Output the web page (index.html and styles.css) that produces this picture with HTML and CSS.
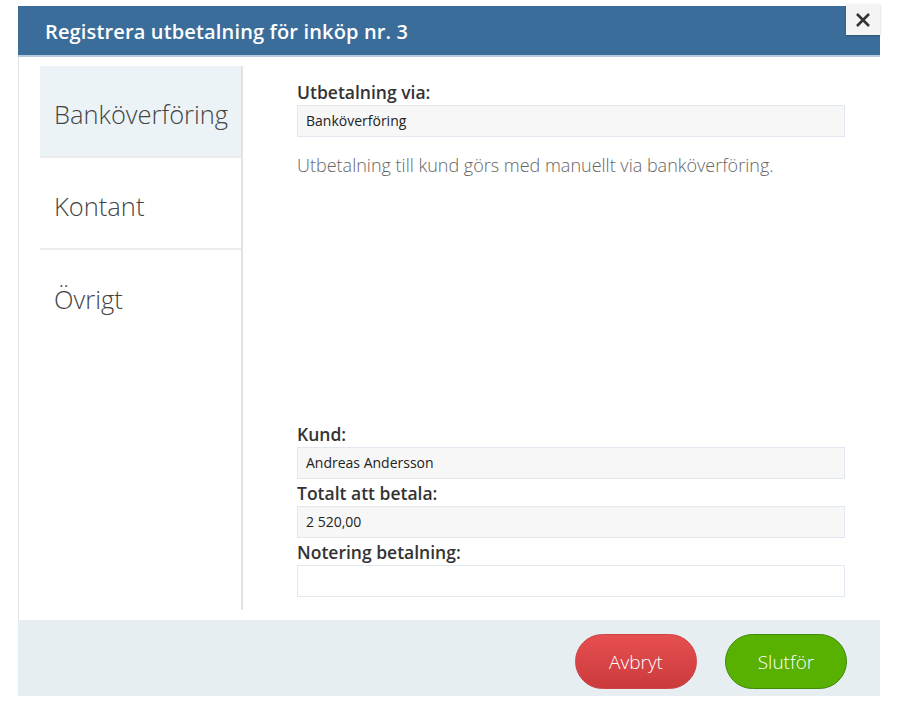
FILE: index.html
```html
<!DOCTYPE html>
<html lang="sv">

<head>
  <meta charset="UTF-8">
  <title>Registrera utbetalning</title>
  <link rel="stylesheet" href="styles.css">
</head>

<body>
  <div class="dialog">
    <div class="header">
      <h1>Registrera utbetalning för inköp nr. 3</h1>
      <button class="close">
        <svg width="16" height="16" viewBox="0 0 16 16"><path d="M2 2 L14 14 M14 2 L2 14" stroke="#333" stroke-width="2.6" fill="none"/></svg>
      </button>
    </div>
    <div class="main">
      <ul class="methods">
        <li class="active">Banköverföring</li>
        <li>Kontant</li>
        <li>Övrigt</li>
      </ul>
      <div class="content">
        <div class="field">
          <label>Utbetalning via:</label>
          <div class="input">Banköverföring</div>
        </div>
        <p class="desc">Utbetalning till kund görs med manuellt via banköverföring.</p>
        <div class="bottom">
          <div class="field">
            <label>Kund:</label>
            <div class="input">Andreas Andersson</div>
          </div>
          <div class="field">
            <label>Totalt att betala:</label>
            <div class="input">2 520,00</div>
          </div>
          <div class="field">
            <label>Notering betalning:</label>
            <div class="input empty"></div>
          </div>
        </div>
      </div>
    </div>
    <div class="footer">
      <button class="btn cancel">Avbryt</button>
      <button class="btn done">Slutför</button>
    </div>
  </div>
</body>

</html>
```

FILE: styles.css
```css
* {
  margin: 0;
  padding: 0;
  box-sizing: border-box;
}

body {
  background: white;
  font-family: 'Open Sans', 'Noto Sans', sans-serif;
  color: #333;
}

.dialog {
  position: relative;
  width: 862px;
  margin: 6px 0 0 18px;
}

.header {
  height: 51px;
  background: #3b6d9b;
  border-bottom: 2px solid #b7cbe0;
  padding-left: 27px;
  display: flex;
  align-items: center;
}

.header h1 {
  color: white;
  font-size: 20px;
  font-weight: 600;
  letter-spacing: 0.15px;
  margin-top: 1px;
}

.close {
  position: absolute;
  right: 0;
  top: -2px;
  width: 34px;
  height: 31px;
  border: none;
  background: #f4f4f4;
  box-shadow: 0 1px 2px rgba(0, 0, 0, 0.25);
  display: flex;
  justify-content: center;
  align-items: center;
}

.main {
  display: flex;
  height: 563px;
  border-left: 1px solid #e4e4e4;
  padding: 9px 0 10px 21px;
}

.methods {
  list-style: none;
  width: 203px;
  border-right: 2px solid #e2e2e2;
}

.methods li {
  height: 92px;
  border-bottom: 2px solid #ececec;
  display: flex;
  align-items: center;
  padding: 5px 0 0 14px;
  font-size: 25.5px;
  font-weight: 300;
  color: #444;
}

.methods li:last-child {
  border-bottom: none;
}

.methods li.active {
  background: #ebf3f7;
}

.content {
  width: 548px;
  margin-left: 54px;
  padding: 14px 0 13px;
  display: flex;
  flex-direction: column;
}

.field label {
  display: block;
  font-size: 17.5px;
  font-weight: 600;
  color: #333;
  line-height: 25px;
}

.input {
  height: 32px;
  background: #f7f7f7;
  border: 1px solid #e2e8ef;
  padding-left: 8px;
  font-size: 14px;
  line-height: 30px;
  color: #222;
}

.input.empty {
  background: white;
}

.desc {
  margin-top: 16px;
  font-size: 18px;
  line-height: 25px;
  font-weight: 300;
  color: #666;
}

.bottom {
  margin-top: auto;
  display: flex;
  flex-direction: column;
  gap: 2px;
}

.footer {
  height: 76px;
  background: #e7eef2;
  display: flex;
  justify-content: flex-end;
  align-items: flex-start;
  gap: 28px;
  padding: 14px 33px 0 0;
}

.btn {
  width: 122px;
  height: 55px;
  border-radius: 28px;
  font-family: 'Open Sans', sans-serif;
  font-size: 19px;
  font-weight: 300;
  color: white;
  cursor: pointer;
}

.cancel {
  background: linear-gradient(#e64f50, #cb3b3c);
  border: 1px solid #c44;
}

.done {
  background: #58b000;
  border: 1px solid #3e8a0a;
}
```
